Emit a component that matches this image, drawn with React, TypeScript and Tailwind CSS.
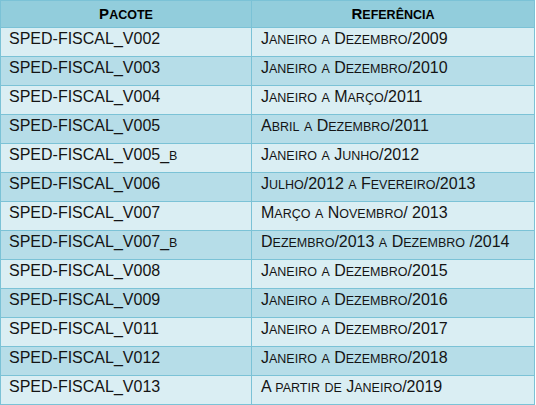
const rows: [string, string][] = [
  ['SPED-FISCAL_V002', 'Janeiro a Dezembro/2009'],
  ['SPED-FISCAL_V003', 'Janeiro a Dezembro/2010'],
  ['SPED-FISCAL_V004', 'Janeiro a Março/2011'],
  ['SPED-FISCAL_V005', 'Abril a Dezembro/2011'],
  ['SPED-FISCAL_V005_b', 'Janeiro a Junho/2012'],
  ['SPED-FISCAL_V006', 'Julho/2012 a Fevereiro/2013'],
  ['SPED-FISCAL_V007', 'Março a Novembro/ 2013'],
  ['SPED-FISCAL_V007_b', 'Dezembro/2013 a Dezembro /2014'],
  ['SPED-FISCAL_V008', 'Janeiro a Dezembro/2015'],
  ['SPED-FISCAL_V009', 'Janeiro a Dezembro/2016'],
  ['SPED-FISCAL_V011', 'Janeiro a Dezembro/2017'],
  ['SPED-FISCAL_V012', 'Janeiro a Dezembro/2018'],
  ['SPED-FISCAL_V013', 'A partir de Janeiro/2019'],
];

// versalete feito à mão: minúsculas viram maiúsculas menores
function SmallCaps({ text, small }: { text: string; small: string }) {
  const parts = text.split(/([a-zà-ÿ]+)/);
  return (
    <>
      {parts.map((p, i) =>
        /^[a-zà-ÿ]+$/.test(p) ? (
          <span key={i} className={small}>
            {p.toUpperCase()}
          </span>
        ) : (
          <span key={i}>{p}</span>
        )
      )}
    </>
  );
}

export default function App() {
  return (
    <div className="min-h-screen w-full bg-white font-['Liberation_Sans',Arial,sans-serif]">
      <table className="w-[535px] table-fixed border-collapse border border-[#7bc2d6] text-[#141414]">
        <colgroup>
          <col className="w-[251px]" />
          <col />
        </colgroup>
        <thead>
          <tr className="h-[27px] bg-[#92cddc]">
            <th className="border border-[#7bc2d6] text-[15px] leading-[18px] font-bold text-black align-middle">
              <SmallCaps text="Pacote" small="text-[12.5px]" />
            </th>
            <th className="border border-[#7bc2d6] text-[15px] leading-[18px] font-bold text-black align-middle">
              <SmallCaps text="Referência" small="text-[12.5px]" />
            </th>
          </tr>
        </thead>
        <tbody>
          {rows.map(([pacote, ref], i) => (
            <tr key={pacote} className={`h-[29px] ${i % 2 === 0 ? 'bg-[#daeef3]' : 'bg-[#b6dde8]'}`}>
              <td className="border border-[#7bc2d6] align-top pl-[8px] pt-[2px] text-[16px] leading-[18px]">
                <SmallCaps text={pacote} small="text-[12.5px]" />
              </td>
              <td className="border border-[#7bc2d6] align-top pl-[9px] pt-[2px] text-[16px] leading-[18px]">
                <SmallCaps text={ref} small="text-[12.5px]" />
              </td>
            </tr>
          ))}
        </tbody>
      </table>
    </div>
  );
}
